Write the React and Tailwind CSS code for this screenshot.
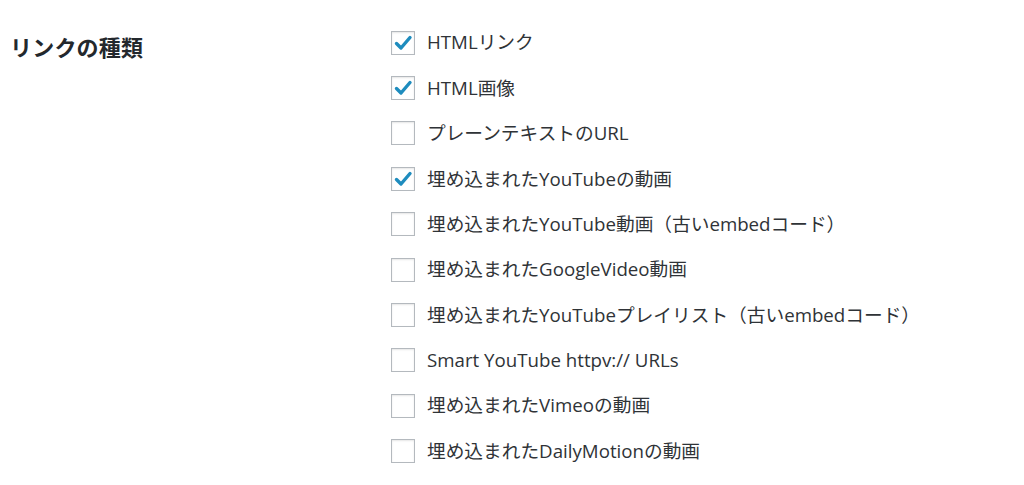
import React from "react";

const items = [
  { label: "HTMLリンク", checked: true },
  { label: "HTML画像", checked: true },
  { label: "プレーンテキストのURL", checked: false },
  { label: "埋め込まれたYouTubeの動画", checked: true },
  { label: "埋め込まれたYouTube動画（古いembedコード）", checked: false },
  { label: "埋め込まれたGoogleVideo動画", checked: false },
  { label: "埋め込まれたYouTubeプレイリスト（古いembedコード）", checked: false },
  { label: "Smart YouTube httpv:// URLs", checked: false },
  { label: "埋め込まれたVimeoの動画", checked: false },
  { label: "埋め込まれたDailyMotionの動画", checked: false },
];

function Box({ checked }) {
  return (
    <span className="w-[24px] h-[24px] shrink-0 border border-[#b4b9be] bg-white shadow-[inset_0_1px_2px_rgba(0,0,0,0.1)] flex items-center justify-center">
      {checked && (
        <svg width="20" height="20" viewBox="0 0 20 20">
          <path d="M3.5 10.5 L8 15 L17 4.5" fill="none" stroke="#1e8cbe" strokeWidth="3.4" strokeLinecap="round" strokeLinejoin="round" />
        </svg>
      )}
    </span>
  );
}

export default function App() {
  return (
    <div
      className="w-[1024px] h-[485px] bg-white flex text-[#2f3337] overflow-hidden"
      style={{ fontFamily: '"Open Sans", "Noto Sans CJK JP", sans-serif' }}
    >
      <div className="w-[391px] shrink-0 pl-[10px] pt-[31px]">
        <h2 className="text-[22px] font-bold text-[#23282d] leading-[32px] tracking-[0.2px]">リンクの種類</h2>
      </div>
      <div className="pt-[20px] flex flex-col">
        {items.map((it, i) => (
          <label key={i} className="h-[45.4px] flex items-center gap-[12px]">
            <Box checked={it.checked} />
            <span className="text-[18.7px] leading-none whitespace-nowrap">{it.label}</span>
          </label>
        ))}
      </div>
    </div>
  );
}
